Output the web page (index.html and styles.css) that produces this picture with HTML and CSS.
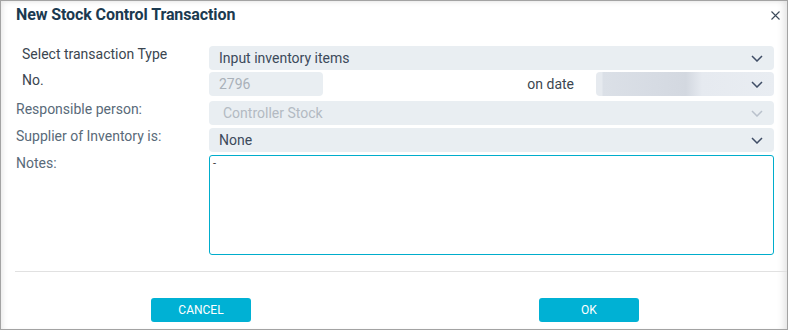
FILE: index.html
```html
<!DOCTYPE html>
<html lang="en">
<head>
  <meta charset="UTF-8" />
  <title>New Stock Control Transaction</title>
  <link rel="stylesheet" href="styles.css">
</head>
<body>
  <div class="dialog">
    <div class="dialog-head">
      <h1>New Stock Control Transaction</h1>
      <span class="close">
        <svg width="9" height="9" viewBox="0 0 9 9"><path d="M0.5 0.5L8.5 8.5M8.5 0.5L0.5 8.5" stroke="#3c4a5a" stroke-width="1.1" fill="none"/></svg>
      </span>
    </div>

    <div class="form">
      <div class="row r1">
        <label class="lbl inset">Select transaction Type</label>
        <div class="field select">
          <span>Input inventory items</span>
          <svg class="chev" width="12" height="7" viewBox="0 0 12 7"><path d="M1 1L6 6L11 1" stroke="#3f4d66" stroke-width="1.5" fill="none"/></svg>
        </div>
      </div>

      <div class="row r2">
        <label class="lbl inset">No.</label>
        <div class="pair">
          <div class="field number"><span>2796</span></div>
          <span class="ondate">on date</span>
          <div class="field date">
            <svg class="chev" width="12" height="7" viewBox="0 0 12 7"><path d="M1 1L6 6L11 1" stroke="#3f4d66" stroke-width="1.5" fill="none"/></svg>
          </div>
        </div>
      </div>

      <div class="row r3">
        <label class="lbl">Responsible person:</label>
        <div class="field select disabled">
          <span>Controller Stock</span>
          <svg class="chev" width="12" height="7" viewBox="0 0 12 7"><path d="M1 1L6 6L11 1" stroke="#b9c1cc" stroke-width="1.5" fill="none"/></svg>
        </div>
      </div>

      <div class="row r4">
        <label class="lbl">Supplier of Inventory is:</label>
        <div class="field select">
          <span>None</span>
          <svg class="chev" width="12" height="7" viewBox="0 0 12 7"><path d="M1 1L6 6L11 1" stroke="#3f4d66" stroke-width="1.5" fill="none"/></svg>
        </div>
      </div>

      <div class="row r5">
        <label class="lbl">Notes:</label>
        <div class="notes">-</div>
      </div>
    </div>

    <div class="sep"></div>

    <div class="actions">
      <button class="btn cancel">CANCEL</button>
      <button class="btn ok">OK</button>
    </div>
  </div>
</body>
</html>
```

FILE: styles.css
```css
html, body {
  margin: 0;
  padding: 0;
  background: #fff;
}
body {
  font-family: Roboto, "Noto Sans", Arial, sans-serif;
}
.dialog {
  width: 788px;
  height: 330px;
  box-sizing: border-box;
  border: 1px solid #a3a3a3;
  box-shadow: inset 6px 0 6px -5px #e4e4e4, inset -8px 0 8px -6px #dcdcdc, inset 0 5px 6px -5px #e4e4e4;
  background: #fff;
  position: relative;
}
.dialog-head {
  display: flex;
  justify-content: space-between;
  align-items: flex-start;
  height: 30px;
  padding: 0 7px 0 15px;
}
.dialog-head h1 {
  margin: 4px 0 0 0;
  font-size: 16px;
  font-weight: 700;
  color: #1b3a50;
  letter-spacing: -0.1px;
}
.close {
  margin-top: 10px;
  line-height: 0;
}
.form {
  padding: 15px 13px 0 15px;
}
.row {
  display: flex;
  align-items: flex-start;
}
.r2 { margin-top: 2px; }
.r3 { margin-top: 5px; }
.r4 { margin-top: 3px; }
.r5 { margin-top: 3px; }
.lbl {
  width: 193px;
  flex: none;
  font-size: 14px;
  line-height: 18px;
  color: #596a79;
  margin-top: -1px;
}
.lbl.inset {
  padding-left: 6px;
  width: 187px;
  color: #3b4650;
}
.field {
  height: 24px;
  box-sizing: border-box;
  background: #e9eef2;
  border-radius: 4px;
  font-size: 14px;
  color: #3c4a5b;
  display: flex;
  align-items: center;
  justify-content: space-between;
  padding: 0 11px 0 10px;
}
.select {
  flex: 1;
}
.disabled {
  color: #b3bac2;
  padding-left: 14px;
}
.pair {
  flex: 1;
  display: flex;
  align-items: center;
}
.number {
  width: 114px;
  color: #a9b1b9;
}
.ondate {
  flex: 1;
  text-align: right;
  padding-right: 22px;
  font-size: 14px;
  color: #3b4650;
}
.date {
  width: 178px;
  justify-content: flex-end;
  background: linear-gradient(90deg, #e6eaef 0px, #e6eaef 6px, #dbe0e7 7px, #d6dbe3 60px, #d3d8e0 90px, #e6eaf0 106px, #e9edf2 180px);
}
.chev {
  flex: none;
}
.notes {
  flex: 1;
  height: 100px;
  box-sizing: border-box;
  border: 1px solid #00adcc;
  border-radius: 3px;
  font-size: 11px;
  line-height: 14px;
  padding: 1px 3px;
  color: #333;
}
.sep {
  margin: 16px 0 0 14px;
  border-top: 1px solid #e1e1e1;
}
.actions {
  display: flex;
  padding: 26px 0 0 150px;
}
.btn {
  width: 100px;
  height: 24px;
  border: none;
  border-radius: 3px;
  background: #00b1d4;
  color: #fff;
  font-family: Roboto, Arial, sans-serif;
  font-size: 12px;
  font-weight: 400;
  padding: 0;
  cursor: pointer;
}
.ok {
  margin-left: 288px;
}
```
